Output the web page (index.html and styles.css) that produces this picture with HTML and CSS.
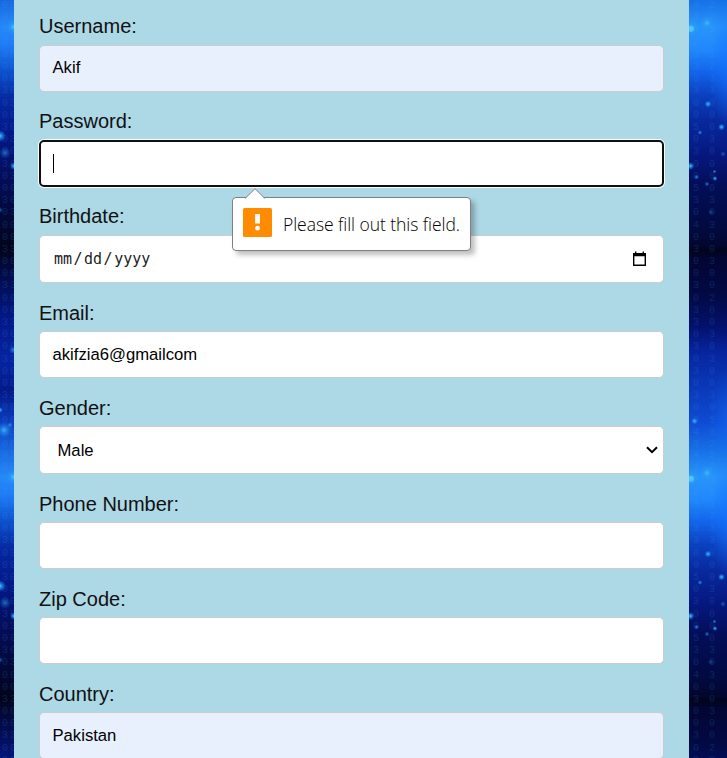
FILE: index.html
```html
<!DOCTYPE html>
<html lang="en">
<head>
<meta charset="utf-8">
<title>Registration</title>
<link rel="stylesheet" href="styles.css">
</head>
<body>
<div class="page">
  <svg class="side" width="14" height="758" viewBox="0 0 14 758" aria-hidden="true">
    <defs>
      <linearGradient id="lg" x1="0" y1="0" x2="0" y2="1">
        <stop offset="0" stop-color="#1868e0"/><stop offset=".06" stop-color="#2688f8"/><stop offset=".1" stop-color="#1f7cf5"/><stop offset=".165" stop-color="#0c4cc8"/><stop offset=".22" stop-color="#0628a0"/><stop offset=".3" stop-color="#041888"/><stop offset=".38" stop-color="#040f60"/><stop offset=".45" stop-color="#020a45"/><stop offset=".55" stop-color="#01051c"/><stop offset=".62" stop-color="#020d50"/><stop offset=".71" stop-color="#041888"/><stop offset=".8" stop-color="#0624a0"/><stop offset=".87" stop-color="#051a88"/><stop offset=".93" stop-color="#0a38b8"/><stop offset="1" stop-color="#1868e0"/>
      </linearGradient>
      <radialGradient id="glow"><stop offset="0" stop-color="#4cc8ff"/><stop offset=".35" stop-color="#2ba0f4" stop-opacity=".75"/><stop offset="1" stop-color="#168cf4" stop-opacity="0"/></radialGradient>
      <g id="lt">
        <rect width="14" height="450" fill="url(#lg)"/>
        <g class="digits">
          <text x="5" y="0" textLength="450">0067300300300300300030030030030030030</text>
          <text x="13" y="0" textLength="450">3073600030030030030030030030030030030</text>
        </g>
        <circle cx="14" cy="27" r="9" fill="url(#glow)"/>
        <circle cx="0" cy="136" r="6" fill="url(#glow)"/>
        <circle cx="5" cy="153" r="6" fill="url(#glow)" opacity=".45"/>
        <circle cx="14" cy="166" r="4" fill="url(#glow)"/>
        <circle cx="0" cy="210" r="3" fill="url(#glow)" opacity=".5"/>
        <circle cx="13" cy="350" r="4" fill="url(#glow)" opacity=".6"/>
        <circle cx="0" cy="410" r="3" fill="url(#glow)"/>
        <circle cx="4" cy="430" r="8" fill="url(#glow)" opacity=".8"/>
        <circle cx="10" cy="425" r="3" fill="url(#glow)" opacity=".6"/>
      </g>
    </defs>
    <use href="#lt"/><use href="#lt" y="450"/>
  </svg>

  <main class="form">
    <div class="field"><span class="label">Username:</span><div class="box filled">Akif</div></div>
    <div class="field">
      <span class="label">Password:</span>
      <div class="box focused"><i class="caret"></i></div>
      <div class="bubble" role="alert">
        <svg class="tip" width="20" height="11" viewBox="0 0 20 11"><path d="M0 11 10 .8 20 11z" fill="#fff"/><path d="M0 10.5 10 .7 20 10.5" fill="none" stroke="#888" stroke-width="1"/></svg>
        <svg width="29" height="29" viewBox="0 0 29 29"><rect width="29" height="29" rx="1.5" fill="#ff8c00"/><path d="M12.1 6h4.8v9.5h-4.8z" fill="#fff"/><circle cx="14.5" cy="20.2" r="2.4" fill="#fff"/></svg>
        <span class="message">Please fill out this field.</span>
      </div>
    </div>
    <div class="field">
      <span class="label">Birthdate:</span>
      <div class="box tall date">
        <span>mm</span><span class="slash">/</span><span>dd</span><span class="slash">/</span><span>yyyy</span>
        <svg class="calendar" width="15" height="16" viewBox="0 0 15 16"><path d="M3 .6h1.400V2h6.200V.6H12V2h2v13H1V2h2zM2.400 5.200v8.400h10.200V5.200z" fill="#000" fill-rule="evenodd"/></svg>
      </div>
    </div>
    <div class="field low"><span class="label">Email:</span><div class="box">akifzia6@gmailcom</div></div>
    <div class="field low">
      <span class="label">Gender:</span>
      <div class="box tall select"><span class="value">Male</span><svg class="chevron" width="12" height="8" viewBox="0 0 12 8"><path d="M1 1.300 6 6.200 11 1.300" fill="none" stroke="#000" stroke-width="2"/></svg></div>
    </div>
    <div class="field low"><span class="label">Phone Number:</span><div class="box"></div></div>
    <div class="field low"><span class="label">Zip Code:</span><div class="box"></div></div>
    <div class="field low"><span class="label">Country:</span><div class="box filled">Pakistan</div></div>
  </main>

  <svg class="side" width="38" height="758" viewBox="0 0 38 758" aria-hidden="true">
    <defs>
      <linearGradient id="rg" x1="0" y1="0" x2="0" y2="1">
        <stop offset="0" stop-color="#1670e6"/><stop offset=".06" stop-color="#2a94fb"/><stop offset=".11" stop-color="#2088fb"/><stop offset=".16" stop-color="#1264ea"/><stop offset=".21" stop-color="#0b41c0"/><stop offset=".27" stop-color="#08289c"/><stop offset=".34" stop-color="#061880"/><stop offset=".41" stop-color="#030e58"/><stop offset=".5" stop-color="#020a42"/><stop offset=".545" stop-color="#020730"/><stop offset=".555" stop-color="#01041c"/><stop offset=".575" stop-color="#020633"/><stop offset=".66" stop-color="#020a45"/><stop offset=".73" stop-color="#041270"/><stop offset=".78" stop-color="#07249c"/><stop offset=".86" stop-color="#0a38b8"/><stop offset=".94" stop-color="#0f4cd4"/><stop offset="1" stop-color="#1670e6"/>
      </linearGradient>
      <radialGradient id="edge"><stop offset="0" stop-color="#1474ff" stop-opacity=".75"/><stop offset="1" stop-color="#1474ff" stop-opacity="0"/></radialGradient>
      <g id="rt">
        <rect width="38" height="450" fill="url(#rg)"/>
        <ellipse cx="42" cy="65" rx="22" ry="65" fill="url(#edge)"/>
        <ellipse cx="42" cy="420" rx="22" ry="55" fill="url(#edge)" opacity=".6"/>
        <g class="digits">
          <text x="7" y="0" textLength="450">4142333300503005304030030330303030343</text>
          <text x="23" y="0" textLength="450">2213123300030000303003002003030030502</text>
        </g>
        <circle cx="2" cy="28" r="11" fill="url(#glow)" opacity=".8"/>
        <circle cx="2" cy="29" r="3" fill="#5cdcff" opacity=".5"/>
        <circle cx="18" cy="23" r="9" fill="url(#glow)" opacity=".7"/>
        <circle cx="19" cy="104" r="3.500" fill="url(#glow)"/>
        <circle cx="32.500" cy="127" r="3.500" fill="url(#glow)"/>
        <circle cx="11" cy="132.500" r="2.500" fill="url(#glow)" opacity=".7"/>
        <circle cx="1.500" cy="166" r="4" fill="url(#glow)"/>
        <circle cx="7.500" cy="177" r="2.500" fill="url(#glow)" opacity=".7"/>
        <circle cx="25.500" cy="171.500" r="2" fill="url(#glow)" opacity=".7"/>
        <circle cx="26" cy="178.500" r="2.500" fill="url(#glow)"/>
        <circle cx="18" cy="184" r="2.500" fill="url(#glow)" opacity=".6"/>
        <circle cx="34" cy="154" r="3" fill="url(#glow)" opacity=".4"/>
        <circle cx="22" cy="212" r="3" fill="url(#glow)" opacity=".3"/>
        <circle cx="5.500" cy="421" r="3.500" fill="url(#glow)"/>
      </g>
    </defs>
    <use href="#rt"/><use href="#rt" y="450"/>
  </svg>
</div>
</body>
</html>
```
FILE: styles.css
```css
* { box-sizing: border-box; }
body {
  margin: 0;
  overflow: hidden;
  font-family: "Liberation Sans", Arial, sans-serif;
  color: #111;
}
.page { display: flex; height: 758px; overflow: hidden; }
.side { display: block; flex: none; }
.digits {
  font: 10px "Liberation Mono", monospace;
  fill: #4ab0ff;
  opacity: .15;
  writing-mode: vertical-rl;
  text-orientation: upright;
}
.form {
  flex: 1;
  padding: 15px 25px 0;
  background: #add8e6;
  height: 800px;
}
.field { position: relative; margin-bottom: 18px; }
.label { display: block; height: 30px; font-size: 20px; line-height: 23px; }
.low .label { padding-top: 1px; }
.box {
  display: flex;
  align-items: center;
  height: 47px;
  padding: 0 12.500px;
  border: 1px solid #ccc;
  border-radius: 5px;
  background: #fff;
  font-size: 16.670px;
  color: #000;
}
.field:first-child .box { padding-bottom: 2px; }
.tall { height: 48px; }
.filled { background: #e8f0fe; }
.focused {
  padding-left: 11.500px;
  border: 2px solid #101010;
  box-shadow: 0 0 0 1px #fff;
}
.caret { width: 1px; height: 19px; background: #000; }
.date {
  padding: 0 16px 0 14px;
  font-family: "DejaVu Sans Mono", monospace;
  font-size: 15px;
  color: #222;
}
.slash { width: 12px; text-align: center; }
.calendar { margin-left: auto; }
.select { justify-content: space-between; padding: 0 5px 0 17.500px; }
.value { padding-top: 2px; }
.bubble {
  position: absolute;
  z-index: 2;
  left: 193px;
  top: 87px;
  width: 239px;
  height: 54px;
  display: flex;
  align-items: center;
  gap: 11px;
  padding: 0 0 3px 10px;
  border: 1px solid #808080;
  border-radius: 4px;
  background: #fff;
  box-shadow: 4px 4px 5px rgba(0, 0, 0, .25);
}
.tip { position: absolute; left: 12px; top: -10px; }
.message {
  padding-top: 2px;
  font: 300 17.500px "Open Sans", "Noto Sans", sans-serif;
  letter-spacing: -.05px;
  color: #000;
  white-space: nowrap;
}
```
